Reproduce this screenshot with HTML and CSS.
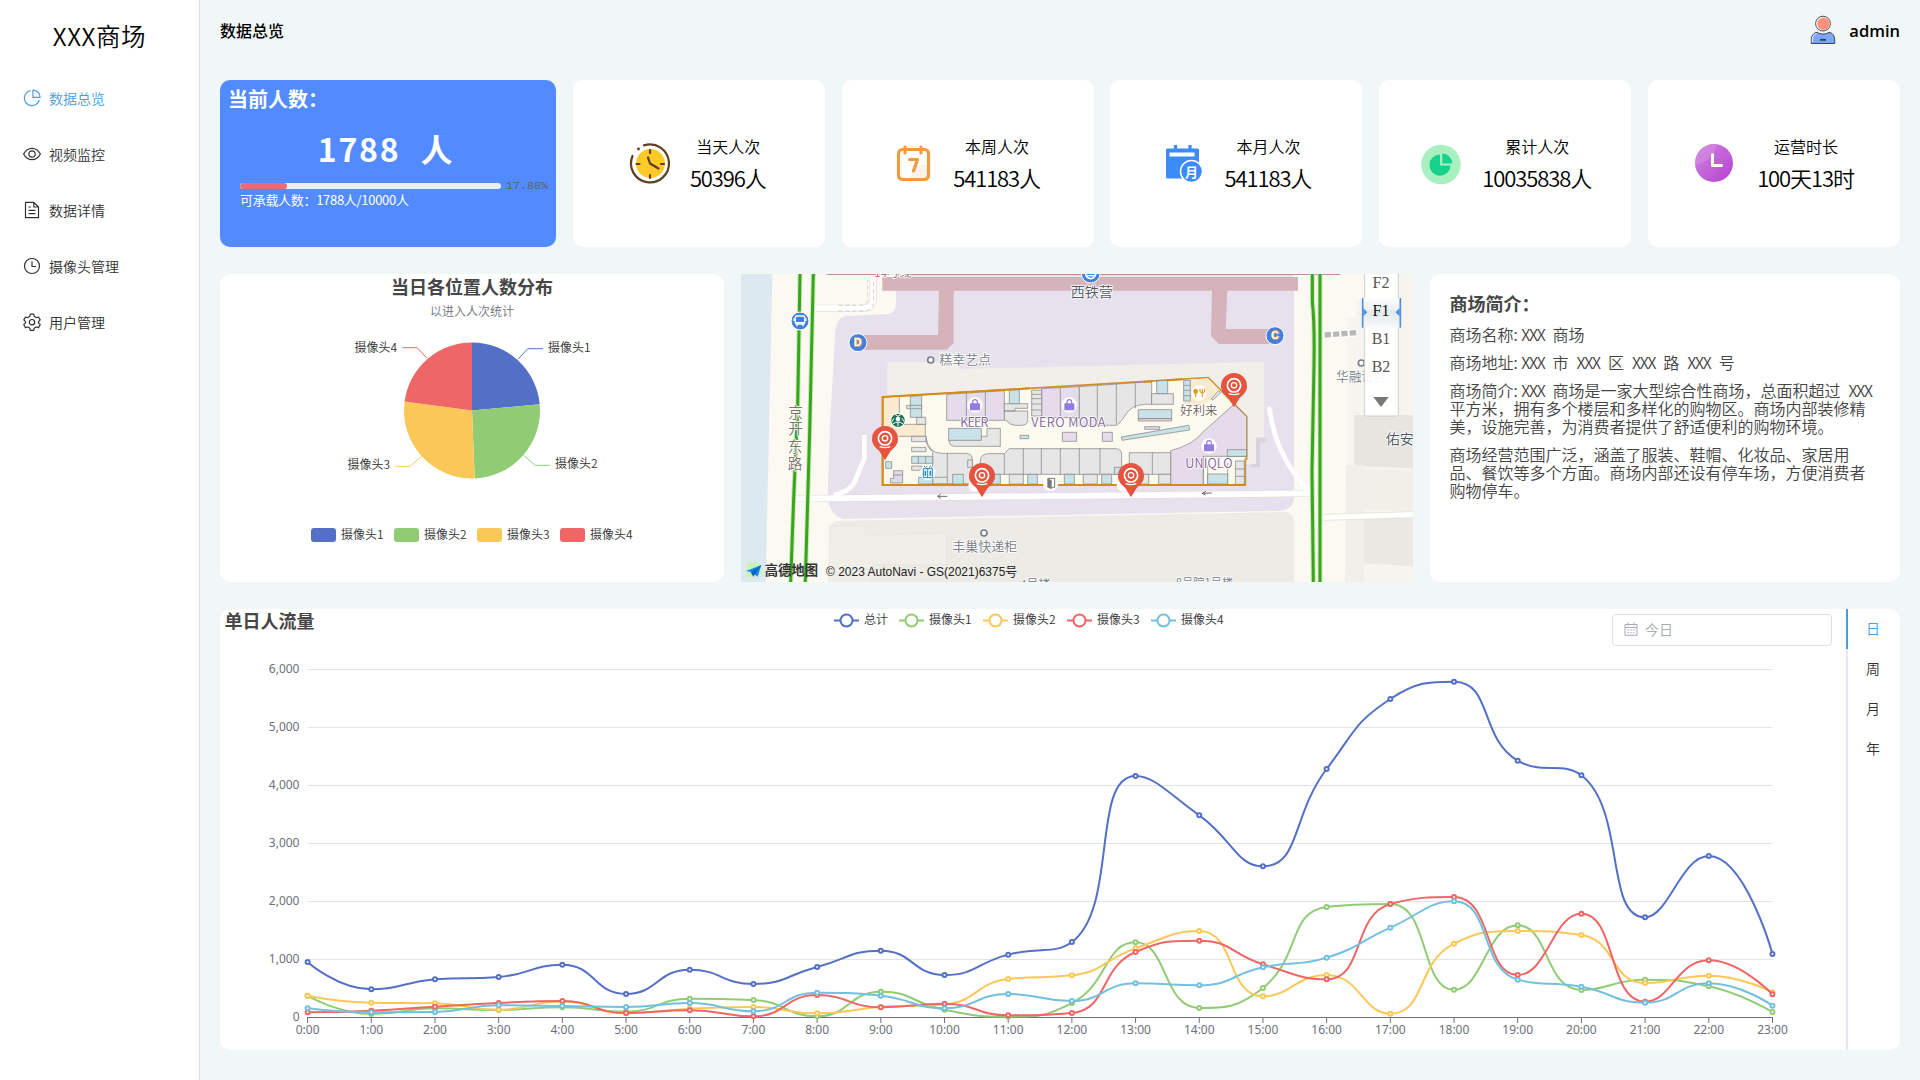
FILE: index.html
```html
<!DOCTYPE html>
<html lang="zh-CN">
<head>
<meta charset="utf-8">
<title>数据总览</title>
<link rel="stylesheet" href="styles.css">
</head>
<body>
<div class="app">
  <aside class="sidebar">
    <h1 class="brand">XXX商场</h1>
    <nav class="menu">
      <a class="menu-item active"><svg class="menu-icon" viewBox="0 0 18 18"><path d="M7.6 1.6A7.6 7.6 0 1 0 16.3 11"/><path d="M9.9 1.1v7.3h7.2A7.3 7.3 0 0 0 9.9 1.1z"/></svg>数据总览</a>
      <a class="menu-item"><svg class="menu-icon" viewBox="0 0 18 18"><path d="M.6 9C2.6 5.400 5.500 3.300 9 3.300s6.400 2.100 8.400 5.700c-2 3.600-4.900 5.700-8.400 5.700S2.600 12.600.6 9z"/><circle cx="9" cy="9" r="3.200"/></svg>视频监控</a>
      <a class="menu-item"><svg class="menu-icon" viewBox="0 0 18 18"><path d="M2.500 1.400h8.300l4.700 4.600v10.600h-13zM10.800 1.400V6h4.700M5.500 6h2.400M5.500 9.300h7M5.500 12.600h7"/></svg>数据详情</a>
      <a class="menu-item"><svg class="menu-icon" viewBox="0 0 18 18"><circle cx="9" cy="9" r="7.500"/><path d="M9 4.500v5h4"/></svg>摄像头管理</a>
      <a class="menu-item"><svg class="menu-icon" viewBox="0 0 18 18"><path d="M7.300 1.200h3.400l.7 2.400 1.700 1 2.400-.6 1.700 2.900-1.700 1.700v1.300l1.700 1.800-1.700 2.900-2.400-.6-1.700 1-.7 2.300H7.300l-.7-2.300-1.700-1-2.400.6-1.700-2.900 1.700-1.800V8.600L.8 6.900 2.500 4l2.400.6 1.700-1z"/><circle cx="9" cy="9.200" r="2.700"/></svg>用户管理</a>
    </nav>
  </aside>
  <main class="main">
    <header class="topbar">
      <h2 class="page-title">数据总览</h2>
      <div class="user">
        <svg class="avatar" viewBox="0 0 26 30"><circle cx="13" cy="8.600" r="7.400" fill="#fff" stroke="#4a4a52" stroke-width="1"/><circle cx="13.500" cy="8.800" r="6.200" fill="#ff907c"/><path d="M1.300 28.500v-3.300C1.300 20.500 3.600 18 7 17.300c3.500 2.300 8.500 2.300 12 0 3.400.7 5.700 3.200 5.700 7.900v3.300z" fill="#7ba5f5" stroke="#3c4657" stroke-width="1"/><path d="M2.300 27v-2c0-3.500 1.600-5.600 4.200-6.500" fill="none" stroke="#fff" stroke-width="1"/><path d="M10 24.800h6" stroke="#27446f" stroke-width="2"/></svg>
        <span>admin</span>
      </div>
    </header>

    <section class="stats">
      <div class="card current">
        <h3 class="current-title">当前人数：</h3>
        <div class="current-value">1788 人</div>
        <div class="progress"><div class="progress-track"><div class="progress-fill" style="width:17.88%"></div></div><span class="progress-text">17.88%</span></div>
        <div class="capacity">可承载人数：1788人/10000人</div>
      </div>
      <div class="card stat">
        <svg class="stat-icon" viewBox="0 0 50 50"><circle cx="25.500" cy="24.500" r="14.500" fill="#ffc928"/><path d="M19 6.400A19 19 0 1 1 7.500 17" fill="none" stroke="#5c4020" stroke-width="2.200" stroke-linecap="round"/><circle cx="13.500" cy="10" r="1.400" fill="#5c4020"/><path d="M25 11v3M25 36v3M11.500 25h3M36 25h3M23 18.500l2 6 8.500 5" fill="none" stroke="#5c4020" stroke-width="2.200" stroke-linecap="round" stroke-linejoin="round"/></svg>
        <div class="stat-info"><span class="stat-label">当天人次</span><span class="stat-value">50396人</span></div>
      </div>
      <div class="card stat">
        <svg class="stat-icon" viewBox="0 0 50 50"><path d="M26 26h13v13H22z" fill="#fff3e9"/><rect x="10.500" y="10.500" width="30" height="30" rx="4" fill="none" stroke="#f29a3f" stroke-width="3.200"/><path d="M17 8v6M33 8v6" stroke="#f29a3f" stroke-width="3.200" stroke-linecap="round"/><path d="M21.500 20.500h8l-4 11.500" fill="none" stroke="#f29a3f" stroke-width="3.200" stroke-linejoin="round" stroke-linecap="round"/></svg>
        <div class="stat-info"><span class="stat-label">本周人次</span><span class="stat-value">541183人</span></div>
      </div>
      <div class="card stat wide">
        <svg class="stat-icon" viewBox="0 0 50 50"><rect x="6" y="9.500" width="33" height="30" rx="1.500" fill="#3d8bf8"/><path d="M15.500 6v5M30 6v5" stroke="#3d8bf8" stroke-width="3.200"/><rect x="9.500" y="13.500" width="25" height="4" fill="#fff"/><circle cx="31.500" cy="32.500" r="11" fill="#3d8bf8" stroke="#fff" stroke-width="1.500"/><text x="31.500" y="37.500" class="month-glyph">月</text></svg>
        <div class="stat-info"><span class="stat-label">本月人次</span><span class="stat-value">541183人</span></div>
      </div>
      <div class="card stat wide">
        <svg class="stat-icon" viewBox="0 0 50 50"><circle cx="24" cy="25.500" r="19.800" fill="#a9f0c1"/><path d="M23 15.500v11h10.600A10.600 10.600 0 1 1 23 15.500z" fill="#18d18b"/><path d="M25.300 14.500a10 10 0 0 1 10 10h-10z" fill="#18d18b"/></svg>
        <div class="stat-info"><span class="stat-label">累计人次</span><span class="stat-value">10035838人</span></div>
      </div>
      <div class="card stat wide">
        <svg class="stat-icon" viewBox="0 0 50 50"><defs><linearGradient id="violet" x1="0" y1="0" x2="1" y2="1"><stop offset="0" stop-color="#cf86e0"/><stop offset="1" stop-color="#b83fd0"/></linearGradient></defs><g transform="translate(-3 -.5)"><circle cx="25" cy="24.500" r="19" fill="url(#violet)"/><path d="M6 26A19 19 0 0 1 28 5.800Q24 24 6 26z" fill="#d88fe4" opacity=".5"/><path d="M23.500 16v11h9" fill="none" stroke="#fff" stroke-width="3" stroke-linecap="round" stroke-linejoin="round"/></g></svg>
        <div class="stat-info"><span class="stat-label">运营时长</span><span class="stat-value">100天13时</span></div>
      </div>
    </section>

    <section class="middle">
      <div class="card pie-card">
        <svg class="pie" viewBox="220 274 504 308">
          <text class="chart-title" x="472" y="293.500" text-anchor="middle">当日各位置人数分布</text>
          <text class="chart-sub" x="472" y="316" text-anchor="middle">以进入人次统计</text>
          <g id="pie-slices"></g>
          <g fill="none" stroke-width="1">
            <path d="M518 359.300L527.800 348.700H543" stroke="#5470c6"/>
            <path d="M523.700 455.300L535.200 465.300H549.800" stroke="#91cc75"/>
            <path d="M421.600 456.300L410.100 466.300H395.300" stroke="#fac858"/>
            <path d="M427 358.300L417.200 347.700H402.400" stroke="#ee6666"/>
          </g>
          <g class="chart-label">
            <text x="548" y="352">摄像头1</text><text x="555" y="468">摄像头2</text>
            <text x="390" y="469" text-anchor="end">摄像头3</text><text x="397" y="351.500" text-anchor="end">摄像头4</text>
            <text x="341" y="538.500">摄像头1</text><text x="424" y="538.500">摄像头2</text><text x="507" y="538.500">摄像头3</text><text x="590" y="538.500">摄像头4</text>
          </g>
          <rect x="311" y="528" width="25" height="14" rx="3" fill="#5470c6"/><rect x="394" y="528" width="25" height="14" rx="3" fill="#91cc75"/><rect x="477" y="528" width="25" height="14" rx="3" fill="#fac858"/><rect x="560" y="528" width="25" height="14" rx="3" fill="#ee6666"/>
        </svg>
      </div>

      <div class="map-card">
        <svg class="map" viewBox="33 27 2016 924" preserveAspectRatio="none">
          <defs>
            <g id="pin"><path d="M0 90L-17 62C-34 48-39 38-39 26A39 39 0 0 1 39 26C39 38 34 48 17 62z" transform="translate(0 6)" fill="#e6543f"/><circle cy="30" r="20" fill="none" stroke="#fff" stroke-width="5"/><circle cy="30" r="8" fill="none" stroke="#fff" stroke-width="4"/><path d="M-16 55Q0 61 16 55" fill="none" stroke="#fff" stroke-width="4"/></g>
            <g id="bag"><circle r="23" fill="#fff"/><rect x="-15" y="-5" width="30" height="21" rx="2" fill="#937ce0"/><path d="M-7 -3v-6a7 7 0 0 1 14 0v6" fill="none" stroke="#937ce0" stroke-width="3.500"/></g>
          </defs>
          <rect x="33" y="27" width="2016" height="924" fill="#fbf9f1"/>
          <path d="M33 27H127L107 951H33z" fill="#dce9f0"/>
          <path d="M498 27H1692V700Q1690 738 1640 738L340 762Q300 750 293 700L300 480L316 200Q320 155 350 153L470 148Q498 146 498 115z" fill="#e7e0ed"/>
          <path d="M330 767L1660 741Q1692 741 1693 770V951H295L299 800Q299 768 330 767z" fill="#ecebe6"/>
          <path d="M300 782H406V812L650 803V900H425V951H295z" fill="#efeee9" stroke="#e5e4de" stroke-width="2"/>
          <path d="M1852 951V160H1880V110H1910V27H2049V951z" fill="#f6f4ef"/>
          <path d="M1872 450H2049V610L1872 602z" fill="#e6e5df"/><path d="M1902 615H2049V738L1902 735z" fill="#f1f0e8"/><path d="M1902 745H2049V904L1902 895z" fill="#e9e8e2"/><path d="M1848 600H1902V951H1845z" fill="#f1efe9"/>
          <path d="M1780 757L2049 749" stroke="#e2e0da" stroke-width="20"/><path d="M1780 757L2049 749" stroke="#fff" stroke-width="16"/>
          <path d="M1782 210L1878 203" stroke="#fff" stroke-width="24"/><path d="M1784 210L1878 203" stroke="#b8b8b8" stroke-width="16" stroke-dasharray="19 6"/>
          <path d="M457 36H1704V77H1492L1487 192H1620V237H1466L1443 212L1446 77H671V235L650 254H390V210H624L627 77H457z" fill="#d4b3bb"/>
          <path d="M290 28H1830" stroke="#b9797c" stroke-width="3"/>
          <path d="M258 130H400Q428 130 430 100V35" fill="none" stroke="#e2dfd8" stroke-width="22"/><path d="M256 130H400Q428 130 430 100V35" fill="none" stroke="#fff" stroke-width="18"/><path d="M325 121H395Q412 119 413 100V45M325 138H400Q431 138 431 105V45" fill="none" stroke="#ccc9c2" stroke-width="2.500" stroke-dasharray="12 9"/>
          <path d="M1578 520H1608V532H1590V606H1560" fill="#d9d2de"/>
          <path d="M472 292H687V312L1602 290V516H1578V597H1540L472 420z" fill="#f2efeb"/>
          <path d="M190 701L1750 685" fill="none" stroke="#dedad6" stroke-width="21"/><path d="M403 510V580L372 655Q350 685 310 690" fill="none" stroke="#fff" stroke-width="14" stroke-linejoin="round"/><path d="M1618 432Q1632 520 1665 580T1735 675" fill="none" stroke="#fff" stroke-width="14" stroke-linecap="round"/><path d="M190 701L1750 685" fill="none" stroke="#fff" stroke-width="18"/>

          <path d="M458 396L1435 338L1550 455V582H1546V660H458z" fill="#fcf9ef" stroke="#d1902c" stroke-width="5"/>
          <g stroke="#7c7c7c" stroke-width="2">
            <g fill="#faead0"><path d="M461 398H508V478H586V514H461z" stroke="none"/><path d="M508 397V450M508 478H586V514H505" fill="none"/></g>
            <path d="M1360 345L1434 340L1470 376L1424 417H1360z" fill="#faead0" stroke="none"/>
            <g fill="#e5dbea">
              <path d="M650 388L823 377V466H650zM709 384V466M766 381V466"/>
              <path d="M935 371L1048 365V458H935zM991 368V458"/>
              <path d="M1322 660V557Q1390 540 1420 500L1512 418L1550 455V574H1420V660z"/>
              <path d="M997 502H1040V529H997zM1117 502H1147V529H1117zM1244 485H1289V493H1244z"/>
            </g>
            <g fill="#e6e6e6">
              <path d="M1048 365L1265 350V418H1245Q1205 420 1190 445T1160 481H1048zM1102 361V481M1159 357V478M1216 354V430"/>
              <path d="M1265 386H1330V418H1265z"/>
              <path d="M823 438H893V470Q890 481 875 481H855Q840 480 830 468L823 464zM823 416H893V430H855V438H823z"/>
              <path d="M905 375H935V453H905zM905 388H935M905 401H935M905 417H935M905 435H935"/>
              <path d="M771 490H811V544H675Q658 544 656 524H749V514H771z"/>
              <path d="M587 514Q595 565 635 565H710Q727 567 727 585V656H608V560Q587 545 587 514zM652 565V656M608 637H652"/>
              <path d="M751 628V585Q753 567 775 566H823L838 551H1160Q1175 553 1175 570V628zM823 566V628M880 551V628M934 551V628M991 551V628M1048 551V628M1110 551V628"/>
              <path d="M1198 563H1322V628H1198zM1267 563V628"/>
              <path d="M838 628H880V657H838zM1060 628H1102V657H1060zM1286 628H1322V657H1286zM1228 628H1256V657H1228z"/>
              <path d="M545 514H588V530H545zM545 547H588V560H545zM545 603H575V616H545zM560 457H587V478H560zM530 421H575V431H530z"/>
              <path d="M1516 588H1543V658H1516zM1516 612H1543M1516 634H1543"/>
              <path d="M713 585H727V607H713zM1443 402L1466 377L1472 383L1449 405z"/>
            </g>
            <g fill="#c9e2e8">
              <path d="M541 394L575 392V457H541zM541 431H575M541 421H575"/>
              <path d="M656 490H754V526H656zM838 376L868 374V416H838zM870 511H896V521H870z"/>
              <path d="M545 574H608V595H545zM565 574V595M587 574V595M566 637H608V657H566z"/>
              <path d="M467 590H485V610H467zM668 628H700V657H668zM785 628H811V657H785zM893 628H922V657H893zM1003 628H1033V657H1003z"/>
              <path d="M1280 348L1313 346V386H1280zM1361 346H1381V408H1361zM1361 361H1381M1361 376H1381M1361 392H1381"/>
              <path d="M1225 434H1325V461H1225zM1174 516L1376 481L1379 495L1176 526zM1433 627H1493V657H1433zM1492 554H1550V574H1492zM1115 628H1145V657H1115zM1153 607H1175V628H1153z"/>
            </g>
            <path d="M1225 461H1325V468H1225z" fill="#ead4df"/>
            <path d="M1421 576H1514V658H1421z" fill="#fcf9ef" stroke="none"/><path d="M1420 574V657M1433 600V657M1493 594V657" fill="none"/><path d="M1433 627H1493V657H1433z" fill="#c9e2e8"/>
            <path d="M491 617H518V654H481V640H491zM491 630H518" fill="#ddd8ee"/>
          </g>
          <path d="M458 396L900 370M1240 351L1265 349M1310 346L1358 343M458 394V660H1546" fill="none" stroke="#d38c16" stroke-width="6"/>

          <path d="M210 27L203 430L191 700L182 951M250 27L239 500L226 951" fill="none" stroke="#cdeab9" stroke-width="15"/><path d="M210 27L203 430L191 700L182 951M250 27L239 500L226 951" fill="none" stroke="#38a51f" stroke-width="9"/>
          <path d="M1747 27V110Q1754 170 1752 300L1746 620L1750 951M1770 27V951" fill="none" stroke="#cdeab9" stroke-width="15"/><path d="M1747 27V110Q1754 170 1752 300L1746 620L1750 951M1770 27V951" fill="none" stroke="#38a51f" stroke-width="9"/>
          <g fill="none" stroke="#6a665f" stroke-width="3"><path d="M652 694H623M632 687L623 694L632 701M1445 684L1417 685M1428 679L1417 685L1426 690"/></g>

          <g class="halo" font-size="39" fill="#777b85">
            <text x="628" y="298">糕幸艺点</text><text x="667" y="859">丰巢快递柜</text><text x="1818" y="347" font-size="38">华融证券</text>
            <text x="432" y="36" font-size="36" fill="#a66a72">14号线</text><text x="870" y="972" font-size="36">4号楼</text><text x="1337" y="966" font-size="34">8号院1号楼</text>
          </g>
          <g class="halo" font-size="42" fill="#4e5360"><text x="1022" y="97">西铁营</text><text x="1967" y="538">佑安</text></g>
          <g class="halo" font-size="44" fill="#7d7268"><text x="175" y="458">京</text><text x="175" y="508">开</text><text x="173" y="561">东</text><text x="173" y="611">路</text></g>
          <circle cx="1450" cy="598" r="17" fill="#fff" opacity=".6"/>
          <g class="halo" font-size="38" fill="#826398"><text x="691" y="486" textLength="84">KEER</text><text x="904" y="486" textLength="222">VERO MODA</text><text x="1366" y="609" textLength="142">UNIQLO</text><text x="1351" y="450" fill="#756257" font-size="37">好利来</text></g>
          <g fill="#fff" stroke="#75808a" stroke-width="5"><circle cx="602" cy="285" r="9"/><circle cx="762" cy="804" r="9"/><circle cx="1894" cy="294" r="9"/></g>
          <g fill="#4380dc" stroke="#fff" stroke-width="3"><circle cx="210" cy="168" r="27"/><circle cx="384" cy="233" r="27"/><circle cx="1635" cy="212" r="27"/><circle cx="1082" cy="26" r="28"/></g>
          <circle cx="1082" cy="26" r="15" fill="none" stroke="#fff" stroke-width="5"/><path d="M1070 32H1095" stroke="#fff" stroke-width="4"/>
          <rect x="196" y="153" width="28" height="24" rx="4" fill="none" stroke="#fff" stroke-width="4"/><path d="M192 160v8M228 160v8M201 178v6M219 178v6M197 173H223" stroke="#fff" stroke-width="4"/>
          <g class="exit-letter"><text x="383" y="244">D</text><text x="1635" y="223">C</text></g>
          <use href="#bag" x="735" y="420"/><use href="#bag" x="1018" y="420"/><use href="#bag" x="1437" y="543"/>
          <circle cx="504" cy="466" r="23" fill="#fff"/><circle cx="504" cy="466" r="20" fill="#207358"/><circle cx="504" cy="462" r="7" fill="#fff"/><path d="M488 477Q504 465 520 477M492 460L486 470M516 460L522 470M495 448L504 454L513 448M504 470V484" fill="none" stroke="#fff" stroke-width="3"/>
          <circle cx="1407" cy="384" r="23" fill="#fff"/><ellipse cx="1397" cy="379" rx="7" ry="8" fill="#e79d1e"/><path d="M1397 380V397M1417 380V397M1410 371V379Q1417 388 1424 379V371M1417 371V382" fill="none" stroke="#e79d1e" stroke-width="3.500"/>
          <circle cx="593" cy="623" r="23" fill="#fff"/><path d="M580 611H607V638H580zM593 611V638M582 603L587 608L592 603M597 608L601 603L606 608" fill="none" stroke="#2389c7" stroke-width="3"/><path d="M586 617V632M601 617V632" stroke="#2389c7" stroke-width="5"/>
          <circle cx="962" cy="655" r="23" fill="#fff"/><path d="M953 640H974V667H965" fill="none" stroke="#777" stroke-width="3"/><path d="M952 640L965 646V673L952 667z" fill="#777"/>
          <circle cx="735" cy="660" r="20" fill="#fff"/><circle cx="1180" cy="660" r="20" fill="#fff"/>
          <use href="#pin" x="465" y="490"/><use href="#pin" x="756" y="601"/><use href="#pin" x="1203" y="601"/><use href="#pin" x="1512" y="331"/>

          <path d="M1904 0H2005V448Q2005 453 2000 453H1909Q1904 453 1904 448z" fill="#fff" fill-opacity=".93" stroke="#cfcfcf" stroke-width="3"/>
          <linearGradient id="floor" x2="0" y2="1"><stop offset="0" stop-color="#fff"/><stop offset=".5" stop-color="#e3eaef"/><stop offset="1" stop-color="#f8fafb"/></linearGradient>
          <rect x="1898" y="99" width="113" height="89" fill="url(#floor)"/><path d="M1898 99V188M2011 99V188" stroke="#4b90e2" stroke-width="5"/><path d="M1900 130L1912 142L1900 154zM2009 130L1996 142L2009 154z" fill="#4b90e2"/>
          <g class="floor"><text x="1953" y="68">F2</text><text x="1953" y="152" fill="#111">F1</text><text x="1953" y="236">B1</text><text x="1953" y="320">B2</text></g>
          <path d="M1930 396H1976L1953 426z" fill="#777"/>

          <path d="M47 935L54 890L90 895L96 925L70 937z" fill="#c5f2ad" opacity=".8"/><path d="M48 918L94 900L83 935L66 922z" fill="#178ae8"/><path d="M62 922L94 900L70 935z" fill="#0d64c8"/>
          <text x="104" y="931" class="map-logo" textLength="160" lengthAdjust="spacingAndGlyphs">高德地图</text>
          <text x="288" y="932" class="map-copy" textLength="574" lengthAdjust="spacingAndGlyphs">© 2023 AutoNavi - GS(2021)6375号</text>
        </svg>
      </div>

      <div class="card intro">
        <h3 class="intro-title">商场简介：</h3>
        <p>商场名称<i>:</i><b>XXX</b> 商场</p>
        <p>商场地址<i>:</i><b>XXX</b> 市 <b>XXX</b> 区 <b>XXX</b> 路 <b>XXX</b> 号</p>
        <p>商场简介<i>:</i><b>XXX</b> 商场是一家大型综合性商场，总面积超过 <b>XXX</b><br>平方米，拥有多个楼层和多样化的购物区。商场内部装修精<br>美，设施完善，为消费者提供了舒适便利的购物环境。</p>
        <p>商场经营范围广泛，涵盖了服装、鞋帽、化妆品、家居用<br>品、餐饮等多个方面。商场内部还设有停车场，方便消费者<br>购物停车。</p>
      </div>
    </section>

    <section class="card flow">
      <div class="flow-chart">
        <svg class="line-chart" viewBox="220 609 1626 441">
          <text class="chart-title" x="224.500" y="628">单日人流量</text>
          <g id="legend" class="chart-label"></g>
          <g id="axes" class="axis"></g>
          <g id="lines"></g>
        </svg>
        <div class="date-input"><svg viewBox="0 0 14 14"><path d="M1 2.500h12v10.800H1zM1 5.500h12M4 .5v3M10 .5v3M3.500 8h1.500M6.300 8h1.500M9.100 8h1.500M3.500 10.700h1.500M6.300 10.700h1.500M9.100 10.700h1.500"/></svg>今日</div>
      </div>
      <div class="tabs"><span class="tab active">日</span><span class="tab">周</span><span class="tab">月</span><span class="tab">年</span></div>
    </section>
  </main>
</div>
<script src="charts.js"></script>
</body>
</html>
```

FILE: styles.css
```css
* { box-sizing: border-box; }
body {
  margin: 0;
  font-family: "Noto Sans CJK SC", sans-serif;
  font-size: 14px;
  color: #303133;
  background: #f1f7f7;
}
h1, h2, h3, p { margin: 0; }
.app { display: flex; width: 1920px; height: 1080px; overflow: hidden; }

.sidebar { width: 200px; background: #fff; border-right: 1px solid #dcdfe6; }
.brand { height: 70px; line-height: 71px; text-align: center; font-size: 24.500px; letter-spacing: .6px; font-weight: 350; color: #000; }
.menu { display: flex; flex-direction: column; }
.menu-item { display: flex; align-items: center; gap: 8px; height: 56px; padding-left: 23px; color: #303133; font-weight: 350; }
.menu-item.active { color: #4a9ce0; }
.menu-icon { width: 18px; height: 18px; fill: none; stroke: currentColor; stroke-width: 1.2; stroke-linejoin: round; }

.main { flex: 1; padding: 0 20px 30px; display: flex; flex-direction: column; gap: 27px; }
.topbar { display: flex; justify-content: space-between; align-items: center; height: 53px; padding-top: 7px; }
.page-title { font-size: 16px; font-weight: 500; color: #000; }
.user { display: flex; align-items: center; gap: 13px; font: 600 16.500px "Open Sans", sans-serif; color: #000; }
.avatar { width: 26px; height: 30px; }

.card { background: #fff; border-radius: 10px; }
.stats { display: flex; justify-content: space-between; height: 167px; }
.current { width: 336px; background: #518bff; color: #fff; padding: 7px 8px 0; }
.current-title { font-size: 20px; font-weight: 700; line-height: 23px; }
.current-value { height: 60px; margin-top: 8px; text-align: center; font-size: 32px; line-height: 60px; font-weight: 700; letter-spacing: 1.800px; word-spacing: 11px; padding-right: 4px; }
.progress { display: flex; align-items: center; gap: 5px; height: 14px; margin: 1px 0 0 12px; }
.progress-track { flex: none; width: 261px; height: 6px; border-radius: 3px; background: #ebeef5; overflow: hidden; }
.progress-fill { height: 100%; border-radius: 3px; background: #ea6b74; }
.progress-text { font: 11.700px "Liberation Mono", monospace; color: #606266; }
.capacity { margin: -2px 0 0 12px; font-size: 13px; line-height: 17px; letter-spacing: -.3px; }

.stat { display: flex; align-items: center; justify-content: center; gap: 15px; width: 252px; padding-right: 7px; }
.stat.wide { padding-right: 2px; }
.stat-icon { width: 50px; height: 50px; }
.month-glyph { font-size: 13px; font-weight: 700; fill: #fff; text-anchor: middle; }
.stat-info { display: flex; flex-direction: column; align-items: center; color: #000; font-weight: 350; padding-bottom: 4px; }
.stat-label { font-size: 16px; line-height: 31px; padding-left: 1px; }
.stat-value { font-size: 22px; line-height: 30px; letter-spacing: -1.100px; }

.middle { display: flex; justify-content: space-between; height: 308px; }
.pie-card { width: 504px; }
.pie, .line-chart, .map { display: block; width: 100%; height: 100%; }
.chart-title { font-size: 18px; font-weight: 700; fill: #464646; }
.chart-sub { font-size: 12px; fill: #6e7079; font-weight: 350; }
.chart-label { font-size: 12px; fill: #333; font-weight: 350; }

.map-card { width: 672px; overflow: hidden; }
.halo { paint-order: stroke; stroke: #fff; stroke-width: 5px; stroke-linejoin: round; font-weight: 350; }
.exit-letter { font: 700 31px "Liberation Sans", sans-serif; fill: #fff; stroke: #e9a35a; stroke-width: 5px; paint-order: stroke; text-anchor: middle; }
.floor { font: 48px "Liberation Serif", serif; fill: #555; text-anchor: middle; }
.map-logo { font-size: 41px; font-weight: 700; fill: #333; }
.map-copy { font: 38px "Liberation Sans", "Noto Sans CJK SC", sans-serif; fill: #222; }

.intro { width: 470.400px; padding: 17px 20px; color: #444; font-size: 16px; line-height: 18px; word-spacing: 4.400px; white-space: nowrap; }
.intro-title { font-size: 18px; line-height: 24px; font-weight: 700; color: #464646; margin-bottom: 10px; }
.intro p { margin-bottom: 10px; font-weight: 350; }
.intro b { font-weight: 350; letter-spacing: -1.200px; }
.intro i { font-style: normal; letter-spacing: 3.200px; }

.flow { display: flex; height: 441px; }
.flow-chart { position: relative; width: 1626px; }
.date-input { position: absolute; top: 5px; right: 14px; display: flex; align-items: center; gap: 7px; width: 220px; height: 32px; padding: 0 0 2px 11px; border: 1px solid #dcdfe6; border-radius: 4px; background: #fff; color: #a8abb2; font-weight: 350; }
.date-input svg { width: 14px; height: 14px; fill: none; stroke: #a8abb2; stroke-width: 1; }
.tabs { flex: 1; display: flex; flex-direction: column; border-left: 2px solid #e4e7ed; }
.tab { height: 40px; margin-left: -2px; padding-left: 18px; line-height: 38px; border-left: 2px solid transparent; font-weight: 350; }
.tab.active { color: #4a9ce0; border-left-color: #4a9ce0; }
.axis { font-size: 12px; fill: #6e7079; font-family: "Noto Sans", sans-serif; }
```

FILE: charts.js
```js
const colors = ['#5470c6', '#91cc75', '#fac858', '#ee6666', '#73c0de'];

// Pie: slice boundaries in degrees, clockwise from the top
const bounds = [0, 84.7, 177.7, 277.6, 360];
const at = a => {
  const r = a * Math.PI / 180;
  return (472 + 68 * Math.sin(r)).toFixed(2) + ' ' + (410.5 - 68 * Math.cos(r)).toFixed(2);
};
document.getElementById('pie-slices').innerHTML = [0, 1, 2, 3].map(i =>
  `<path d="M472 410.5L${at(bounds[i])}A68 68 0 0 1 ${at(bounds[i + 1])}z" fill="${colors[i]}"/>`).join('');

// Line chart
const series = [
  [948,477,649,690,902,397,816,569,862,1144,724,1075,1293,4155,3477,2598,4276,5483,5782,4420,4167,1718,2776,1086],
  [368,52,150,120,170,92,316,293,11,437,125,6,241,1287,155,500,1897,1948,471,1580,466,644,529,86],
  [368,247,235,126,266,64,141,172,63,172,217,655,718,1184,1483,356,724,57,1264,1483,1414,586,713,425],
  [80,109,178,241,276,69,118,11,379,167,230,29,69,1121,1316,908,649,1948,2069,724,1782,264,977,391],
  [149,80,86,201,190,172,241,98,420,368,152,397,276,580,546,856,1023,1540,1994,644,523,247,580,195]
];
const px = i => 307.6 + i * 63.69;
const py = v => 1017 - v * 0.058;

function smoothPath(pts) {
  const clamp = (v, a, b) => Math.max(Math.min(a, b), Math.min(Math.max(a, b), v));
  let d = `M${pts[0][0]} ${pts[0][1]}`;
  let c0 = pts[0];
  for (let i = 1; i < pts.length; i++) {
    const p = pts[i], prev = pts[i - 1], next = pts[i + 1];
    let c1 = p, n0 = p;
    if (next) {
      const lp = Math.hypot(p[0] - prev[0], p[1] - prev[1]);
      const ln = Math.hypot(next[0] - p[0], next[1] - p[1]);
      const k = 0.5 * ln / (ln + lp);
      n0 = [0, 1].map(j => clamp(p[j] + (next[j] - prev[j]) * k, next[j], p[j]));
      c1 = [0, 1].map(j => clamp(p[j] - (n0[j] - p[j]) * lp / ln, prev[j], p[j]));
      n0 = [0, 1].map(j => p[j] + (p[j] - c1[j]) * ln / lp);
    }
    d += `C${c0[0]} ${c0[1]} ${c1[0]} ${c1[1]} ${p[0]} ${p[1]}`;
    c0 = n0;
  }
  return d;
}

document.getElementById('lines').innerHTML = series.map((s, k) => {
  const pts = s.map((v, i) => [px(i), py(v)]);
  return `<path d="${smoothPath(pts)}" fill="none" stroke="${colors[k]}" stroke-width="2"/>` +
    pts.map(p => `<circle cx="${p[0]}" cy="${p[1]}" r="2" fill="#fff" stroke="${colors[k]}" stroke-width="2"/>`).join('');
}).join('');

let axes = '';
for (let v = 0; v <= 6; v++) {
  const y = 1017.5 - v * 58;
  axes += `<path d="M307.6 ${y}H1772.5" stroke="${v ? '#e0e4ea' : '#6e7079'}"/>` +
    `<text x="299.5" y="${y + 3}" text-anchor="end">${(v * 1000).toLocaleString('en-US')}</text>`;
}
for (let h = 0; h < 24; h++) {
  axes += `<path d="M${px(h)} 1017v6" stroke="#6e7079"/><text x="${px(h)}" y="1034" text-anchor="middle">${h}:00</text>`;
}
document.getElementById('axes').innerHTML = axes;

document.getElementById('legend').innerHTML =
  [['总计', 834], ['摄像头1', 899], ['摄像头2', 983], ['摄像头3', 1067], ['摄像头4', 1151]].map(([name, x], k) =>
    `<path d="M${x} 620.5h25" stroke="${colors[k]}" stroke-width="2"/>` +
    `<circle cx="${x + 12.5}" cy="620.5" r="6" fill="#fff" stroke="${colors[k]}" stroke-width="2"/>` +
    `<text x="${x + 30}" y="624">${name}</text>`).join('');
```
